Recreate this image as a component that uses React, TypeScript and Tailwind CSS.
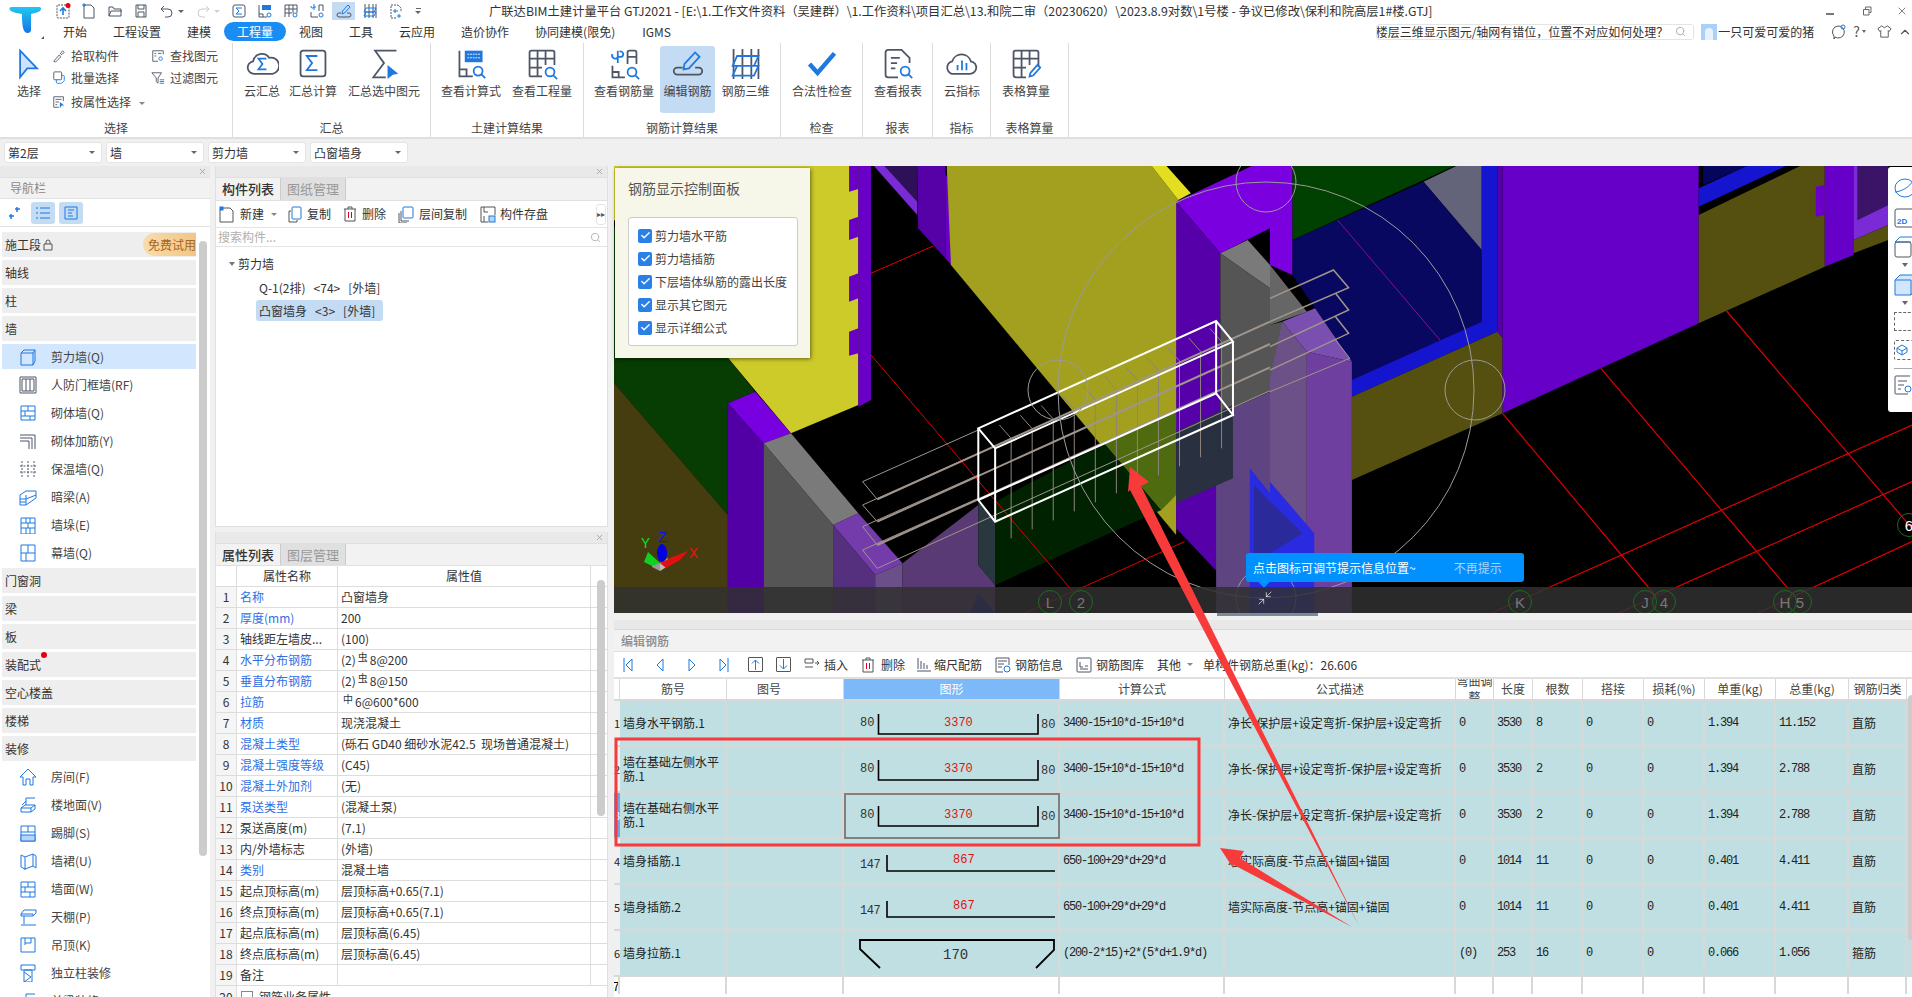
import React from "react";
import { Check, Minimize2, Search, X, ChevronUp } from "lucide-react";

const GRAY = "#4d5566";
const BLUE = "#1f78e0";

function Ico({ s = 16, vb = 16, children }: { s?: number; vb?: number; children: React.ReactNode }) {
  return (
    <svg width={s} height={s} viewBox={`0 0 ${vb} ${vb}`} fill="none" stroke={GRAY} strokeWidth={vb > 16 ? 2 : 1} className="shrink-0">
      {children}
    </svg>
  );
}

const Sigma = ({ x, y, k = 1, c = BLUE }: { x: number; y: number; k?: number; c?: string }) => (
  <polyline points={`${x + 12 * k},${y} ${x},${y} ${x + 6 * k},${y + 8 * k} ${x},${y + 16 * k} ${x + 12 * k},${y + 16 * k}`} stroke={c} fill="none" strokeWidth={2} />
);

const Mag = ({ x, y, r = 4 }: { x: number; y: number; r?: number }) => (
  <g stroke={BLUE} strokeWidth={2}>
    <circle cx={x} cy={y} r={r} fill="#fff" />
    <line x1={x + r * 0.7} y1={y + r * 0.7} x2={x + r + 3} y2={y + r + 3} />
  </g>
);

const big: Record<string, React.ReactNode> = {
  select: <polygon points="8,3 27,23 16,23 8,33" fill="#cfe2fb" stroke={BLUE} strokeWidth={2} />,
  cloudSum: (
    <>
      <path d="M10 29 a7 7 0 0 1 -2 -14 a10 10 0 0 1 18 -4 a8 8 0 0 1 4 18 z" stroke={GRAY} strokeWidth={2} />
      <Sigma x={14} y={12} k={0.75} />
    </>
  ),
  sum: (
    <>
      <rect x="4" y="3" width="28" height="29" rx="3" stroke={GRAY} strokeWidth={2} />
      <Sigma x={11} y={9} />
    </>
  ),
  sumSel: (
    <>
      <polyline points="32,3 8,3 18,17 6,33 20,33" stroke={GRAY} strokeWidth={2} />
      <polygon points="22,19 34,29 28,30 22,35" fill={BLUE} />
    </>
  ),
  calcF: (
    <>
      <polyline points="5,3 5,32 20,32" stroke={GRAY} strokeWidth={2} />
      <polyline points="5,24 13,24 13,32" stroke={GRAY} strokeWidth={2} />
      <rect x="11" y="3" width="20" height="13" fill={BLUE} stroke="none" />
      <path d="M14 7h14M14 11h14" stroke="#fff" strokeDasharray="2 1" />
      <Mag x={26} y={26} r={5} />
    </>
  ),
  calcQ: (
    <>
      <path d="M4 32V5a2 2 0 0 1 2-2h24a2 2 0 0 1 2 2v14M4 12h28M4 22h14M13 3v29M22 3v16M4 32h14" stroke={GRAY} strokeWidth={2} />
      <Mag x={27} y={27} r={5} />
    </>
  ),
  rebarQ: (
    <>
      <path d="M5 20v13h14M5 27h7v6" stroke={GRAY} strokeWidth={2} />
      <path d="M22 18V5a2 2 0 0 1 2-2h6a2 2 0 0 1 2 2v13M22 10h10" stroke={GRAY} strokeWidth={2} />
      <path d="M11 3v14M5 7a3 3 0 0 0 6 3h4a3 3 0 0 0-2-6" stroke={BLUE} strokeWidth={2} />
      <Mag x={27} y={27} r={5} />
    </>
  ),
  edit: (
    <>
      <path d="M12 22H6a3 3 0 0 0 0 8h24a3 3 0 0 0 0-8h-4" stroke={GRAY} strokeWidth={2} />
      <path d="M13 24l1-6L26 5l5 5-12 13z" stroke={BLUE} strokeWidth={2} />
    </>
  ),
  rebar3d: (
    <>
      <path d="M4 1v34M14 1v34M24 1v34M32 1v34" stroke={GRAY} strokeWidth={2} />
      <path d="M8 9h24l-5 11H3zM8 20h24l-5 11H3z" stroke={BLUE} strokeWidth={2} />
    </>
  ),
  check: <polyline points="4,18 13,28 32,6" stroke={BLUE} strokeWidth={5} />,
  report: (
    <>
      <path d="M18 33H7a3 3 0 0 1-3-3V5a3 3 0 0 1 3-3h15l9 9v6" stroke={GRAY} strokeWidth={2} />
      <path d="M10 11h10M10 17h7M10 23h5" stroke={GRAY} strokeWidth={2} />
      <Mag x={26} y={26} r={5} />
    </>
  ),
  cloudIdx: (
    <>
      <path d="M10 29 a7 7 0 0 1 -3 -14 a11 11 0 0 1 21 0 a7 7 0 0 1 -2 14 z" stroke={GRAY} strokeWidth={2} />
      <path d="M13 25v-6M18 25V14M23 25v-8" stroke={BLUE} strokeWidth={2} />
    </>
  ),
  tableCalc: (
    <>
      <path d="M4 30V5a2 2 0 0 1 2-2h24a2 2 0 0 1 2 2v16M4 12h28M4 22h14M13 3v30M22 3v16M4 30a3 3 0 0 0 3 3h11" stroke={GRAY} strokeWidth={2} />
      <path d="M22 32l1-4 8-9 3 3-8 9z" stroke={BLUE} strokeWidth={2} />
    </>
  ),
};

function BigBtn({ icon, label, cls }: { icon: string; label: string; cls: string }) {
  return (
    <div className={`flex flex-col items-center pt-[2px] h-[67px] rounded-[3px] ${cls}`}>
      <svg width="34" height="32" viewBox="0 0 36 36" fill="none" className="shrink-0">
        {big[icon]}
      </svg>
      <span className="mt-[2px] text-[12px] leading-[18px] text-[#444] whitespace-nowrap">{label}</span>
    </div>
  );
}

function Group({ label, w, children }: { label: string; w: string; children: React.ReactNode }) {
  return (
    <div className={`flex flex-col h-[94px] mt-[2px] border-r border-[#dcdcdc] ${w}`}>
      <div className="flex h-[76px] pt-[3px]">{children}</div>
      <div className="text-center text-[12px] leading-[18px] text-[#444]">{label}</div>
    </div>
  );
}

function SmallBtn({ label, children, cls = "" }: { label: string; children: React.ReactNode; cls?: string }) {
  return (
    <div className={`flex items-center h-[22px] text-[12px] text-[#444] whitespace-nowrap ${cls}`}>
      {children}
      <span className="ml-[5px]">{label}</span>
    </div>
  );
}

function Combo({ text }: { text: string }) {
  return (
    <div className="flex items-center justify-between w-[98px] h-[21px] pl-[3px] pr-[6px] bg-white rounded-[3px] border border-[#e4e4e4] text-[12px] text-[#333]">
      <span>{text}</span>
      <span className="w-0 h-0 border-x-[3px] border-x-transparent border-t-[3px] border-t-[#666]" />
    </div>
  );
}

function QA({ children, cls = "" }: { children: React.ReactNode; cls?: string }) {
  return <div className={`flex items-center justify-center w-[16px] h-[18px] ${cls}`}>{children}</div>;
}

function TitleBar() {
  return (
    <div className="flex items-center h-[22px] w-full">
      <div className="flex items-center w-[439px] pl-[5px] gap-[10px]">
        <QA>
          <Ico>
            <rect x="2" y="2" width="12" height="13" rx="1" strokeDasharray="2 1" />
            <path d="M8 12V5M5 8l3-3 3 3" stroke={BLUE} strokeWidth={1.6} />
            <circle cx="13" cy="2.5" r="2.5" fill="#e60012" stroke="none" />
          </Ico>
        </QA>
        <QA>
          <Ico>
            <path d="M3 2h7l3 3v10H3z" />
            <path d="M2 1h2v2H2z" stroke={BLUE} />
          </Ico>
        </QA>
        <QA>
          <Ico>
            <path d="M2 13V4h4l1 2h7v7zM2 13l2-5h11" />
          </Ico>
        </QA>
        <QA>
          <Ico>
            <path d="M3 2h10v12H3zM5 2v4h6V2M5 14v-5h6v5" />
          </Ico>
        </QA>
        <div className="flex items-center w-[26px]">
          <Ico>
            <path d="M5 3L2 6l3 3M2 6h7a4 4 0 0 1 0 8H6" />
          </Ico>
          <span className="ml-[3px] w-0 h-0 border-x-[3px] border-x-transparent border-t-[3px] border-t-[#666]" />
        </div>
        <div className="flex items-center w-[26px] opacity-30">
          <Ico>
            <path d="M11 3l3 3-3 3M14 6H7a4 4 0 0 0 0 8h3" />
          </Ico>
          <span className="ml-[3px] w-0 h-0 border-x-[3px] border-x-transparent border-t-[3px] border-t-[#666]" />
        </div>
        <QA>
          <Ico>
            <rect x="2" y="2" width="12" height="12" rx="2" />
            <polyline points="11,5 5,5 8,8 5,11 11,11" stroke={BLUE} />
          </Ico>
        </QA>
        <QA>
          <Ico>
            <path d="M2 2v12h8M2 11h4v3" />
            <rect x="5" y="2" width="9" height="5" fill={BLUE} stroke="none" />
            <circle cx="12" cy="12" r="2" stroke={BLUE} />
          </Ico>
        </QA>
        <QA>
          <Ico>
            <path d="M2 14V2h12v8M2 6h12M2 10h7M6 2v12M10 2v8" />
            <circle cx="12" cy="12" r="2" stroke={BLUE} />
          </Ico>
        </QA>
        <QA>
          <Ico>
            <path d="M2 9v5h7M10 8V2h4v6" />
            <path d="M5 1v6M2 3a1.5 1.5 0 0 0 3 1h2" stroke={BLUE} />
            <circle cx="12" cy="12" r="2" stroke={BLUE} />
          </Ico>
        </QA>
        <QA cls="bg-[#c3dbf3] w-[23px] -mx-[3px]">
          <Ico>
            <path d="M5 10H3a2 2 0 0 0 0 4h10a2 2 0 0 0 0-4h-2" />
            <path d="M6 11l.5-3L12 2l2 2-5.500 6z" stroke={BLUE} />
          </Ico>
        </QA>
        <QA>
          <Ico>
            <path d="M3 1v14M7 1v14M11 1v14M14 1v14" />
            <path d="M4 5h10l-2 4H2zM4 9h10l-2 4H2z" stroke={BLUE} />
          </Ico>
        </QA>
        <QA>
          <Ico>
            <path d="M8 15H3V2h7l3 3v4" strokeDasharray="2 1" />
            <path d="M11 11v4M9 13h4M5 8h5M7 6v4" stroke={BLUE} />
          </Ico>
        </QA>
        <div className="ml-[1px] flex flex-col items-center gap-[2px]">
          <span className="w-[5px] h-px bg-[#666]" />
          <span className="w-0 h-0 border-x-[3px] border-x-transparent border-t-[3px] border-t-[#666]" />
        </div>
      </div>
      <div className="text-[12.300px] text-[#333] whitespace-nowrap">
        广联达BIM土建计量平台 GTJ2021 - [E:\1.工作文件资料（吴建群）\1.工作资料\项目汇总\13.和院二审（20230620）\2023.8.9对数\1号楼 - 争议已修改\保利和院高层1#楼.GTJ]
      </div>
      <div className="ml-auto flex items-center pr-[4px] text-[#555]">
        <span className="w-[8px] h-[2px] mt-[6px] bg-[#777]" />
        <svg width="10" height="10" viewBox="0 0 10 10" fill="none" stroke="#666" className="ml-[28px]">
          <path d="M1.500 3.500h5.500v5.500h-5.500zM3.500 3V1h5.500v5.500H7.500" />
        </svg>
        <X size={12} strokeWidth={1.5} className="ml-[24px]" />
      </div>
    </div>
  );
}

const tabs = [
  ["开始", "ml-[13px]"],
  ["工程设置", "ml-[26px]"],
  ["建模", "ml-[26px]"],
  ["工程量", "ml-[13px]"],
  ["视图", "ml-[13px]"],
  ["工具", "ml-[26px]"],
  ["云应用", "ml-[26px]"],
  ["造价协作", "ml-[26px]"],
  ["协同建模(限免)", "ml-[26px]"],
  ["IGMS", "ml-[27px]"],
];

function TabBar() {
  return (
    <div className="flex items-center h-[19px] w-full">
      {tabs.map(([t, m]) =>
        t === "工程量" ? (
          <span key={t} className={`${m} flex items-center justify-center w-[62px] h-[19px] rounded-full bg-[#1a8df5] text-white text-[12px] shrink-0`}>
            {t}
          </span>
        ) : (
          <span key={t} className={`${m} text-[12px] text-[#333] whitespace-nowrap shrink-0`}>
            {t}
          </span>
        )
      )}
      <div className="ml-auto flex items-center justify-end w-[318px] h-[16px] bg-white border border-[#e4e4e4] rounded-[3px] overflow-hidden shrink-0">
        <span className="text-[12px] text-[#333] whitespace-nowrap leading-[14px] shrink-0">楼层三维显示图元/轴网有错位，位置不对应如何处理？</span>
        <span className="flex items-center justify-center w-[25px] h-full bg-white shrink-0">
          <Search size={11} color="#aaa" />
        </span>
      </div>
      <div className="ml-[7px] w-[16px] h-[16px] bg-[#a8d0f8] flex items-end justify-center shrink-0">
        <span className="w-[8px] h-[12px] rounded-t-full bg-[#e8f2fc]" />
      </div>
      <span className="ml-[1px] text-[12px] text-[#333] whitespace-nowrap shrink-0">一只可爱可爱的猪</span>
      <svg width="16" height="16" viewBox="0 0 16 16" fill="none" stroke="#555" className="ml-[16px] shrink-0">
        <path d="M8 2a6 6 0 1 1-3 11l-1 2v-3A6 6 0 0 1 8 2z" />
        <circle cx="13" cy="3" r="2" stroke={BLUE} />
      </svg>
      <span className="ml-[7px] text-[14px] text-[#555]">?</span>
      <span className="ml-[2px] w-0 h-0 border-x-[2px] border-x-transparent border-t-[3px] border-t-[#666]" />
      <svg width="15" height="15" viewBox="0 0 16 16" fill="none" stroke="#555" className="ml-[11px] shrink-0">
        <path d="M5 2L1 5l2 3 1-1v7h8V7l1 1 2-3-4-3-3 2z" />
      </svg>
      <ChevronUp size={14} color="#555" className="ml-[6px] shrink-0" />
    </div>
  );
}

function Ribbon() {
  return (
    <div className="flex h-[98px] bg-white border-b-2 border-[#dfdfdf] shrink-0">
      <Group label="选择" w="w-[233px]">
        <BigBtn icon="select" label="选择" cls="w-[40px] ml-[9px]" />
        <div className="ml-[3px] w-[99px] -mt-[1px] flex flex-col">
          <SmallBtn label="拾取构件">
            <Ico s={14}>
              <path d="M2 14l6-7 2 2-6 6zM9 6l3-4 2 2-4 3" />
            </Ico>
          </SmallBtn>
          <SmallBtn label="批量选择">
            <Ico s={14}>
              <rect x="2" y="1" width="9" height="9" rx="1" />
              <path d="M5 10v3a1 1 0 0 0 1 1h5l3-3V6a1 1 0 0 0-1-1h-2" stroke={BLUE} />
            </Ico>
          </SmallBtn>
          <SmallBtn label="按属性选择" cls="mt-[2px]">
            <Ico s={14}>
              <path d="M13 7V2H2v12h6M4 5h7M4 8h4M4 11h2" />
              <polygon points="9,8 14,12 11,12 9,15" fill={BLUE} stroke="none" />
            </Ico>
          </SmallBtn>
          <span className="absolute left-[139px] top-[102px] w-0 h-0 border-x-[3px] border-x-transparent border-t-[3px] border-t-[#888]" />
        </div>
        <div className="w-[64px] -mt-[1px] flex flex-col">
          <SmallBtn label="查找图元">
            <Ico s={14}>
              <path d="M14 6V2H2v12h6M4 5h2M8 5h4M4 8h2" />
              <circle cx="11" cy="11" r="2" stroke={BLUE} />
            </Ico>
          </SmallBtn>
          <SmallBtn label="过滤图元">
            <Ico s={14}>
              <path d="M1 2h11L8 8v6L6 12V8z" />
              <path d="M10 10h5M10 12h5M10 14h5" stroke={BLUE} />
            </Ico>
          </SmallBtn>
        </div>
      </Group>
      <Group label="汇总" w="w-[198px]">
        <BigBtn icon="cloudSum" label="云汇总" cls="w-[46px] ml-[6px]" />
        <BigBtn icon="sum" label="汇总计算" cls="w-[52px] ml-[2px]" />
        <BigBtn icon="sumSel" label="汇总选中图元" cls="w-[76px] ml-[7px]" />
      </Group>
      <Group label="土建计算结果" w="w-[153px]">
        <BigBtn icon="calcF" label="查看计算式" cls="w-[64px] ml-[8px]" />
        <BigBtn icon="calcQ" label="查看工程量" cls="w-[64px] ml-[7px]" />
      </Group>
      <Group label="钢筋计算结果" w="w-[197px]">
        <BigBtn icon="rebarQ" label="查看钢筋量" cls="w-[64px] ml-[8px]" />
        <BigBtn icon="edit" label="编辑钢筋" cls="w-[55px] ml-[4px] bg-[#c3dbf3]" />
        <BigBtn icon="rebar3d" label="钢筋三维" cls="w-[55px] ml-[3px]" />
      </Group>
      <Group label="检查" w="w-[82px]">
        <BigBtn icon="check" label="合法性检查" cls="w-[64px] ml-[9px]" />
      </Group>
      <Group label="报表" w="w-[70px]">
        <BigBtn icon="report" label="查看报表" cls="w-[52px] ml-[9px]" />
      </Group>
      <Group label="指标" w="w-[58px]">
        <BigBtn icon="cloudIdx" label="云指标" cls="w-[40px] ml-[9px]" />
      </Group>
      <Group label="表格算量" w="w-[78px]">
        <BigBtn icon="tableCalc" label="表格算量" cls="w-[52px] ml-[9px]" />
      </Group>
    </div>
  );
}

function PanelHead() {
  return (
    <div className="flex items-center justify-end h-[11px] bg-[#e9e9e9] pr-[3px] shrink-0">
      <X size={9} color="#999" strokeWidth={2} />
    </div>
  );
}

const navIcons: Record<string, React.ReactNode> = {
  cube: <path d="M2 5h12v12H2zM2 5l3-3h11v11l-2 4M14 5l2-3" />,
  frame: <path d="M1 1h16v16H1zM3 3h12v12H3zM7 3v12M11 3v12" />,
  brick: <path d="M2 2h14v14H2zM2 7h14M2 12h14M9 2v5M6 7v5M11 12v4" />,
  hook: <path d="M1 3h15v14M1 6h12v11M1 9h9v8" />,
  dash: <path d="M3 1v16M15 1v16M9 1v16M1 6h16M1 12h16" strokeDasharray="2 1.500" />,
  beam: <path d="M1 7l6-4h10v4l-10 4H1zM1 11v6h6v-6M7 7v4M7 14H1M17 7v3l-10 7" />,
  pier: <path d="M2 2h14v16H2zM2 7h14M2 12h14M7 2v5M11 2v5M9 7v5M7 12v6M11 12v6" />,
  curtain: <path d="M2 1h14v16H2zM2 9h14M9 1v8M7 9v8" />,
  room: <path d="M9 1L1 9h3v8h3v-6h4v6h3V9h3z" />,
  floor: <path d="M2 16v-4l4-3h10v4l-4 3zM2 12h10v4M12 12l4-3M7 9V2h9M7 5l-4 4" />,
  skirt: (
    <>
      <path d="M2 2h14v15H2zM2 8h14M9 2v6" />
      <rect x="2" y="11" width="14" height="6" fill="#b8d4f5" />
    </>
  ),
  dado: <path d="M2 3l4 2 8-3 3 2v12l-3-2-8 3-4-2zM6 5v13M14 2v12" />,
  wall: <path d="M2 2h14v15H2zM2 7h14M2 12h14M9 2v5M6 7v5M11 12v5" />,
  ceil: <path d="M2 6l3-4h12v3l-3 3H2zM2 6h12v2M5 8v8M2 17h15" />,
  susp: <path d="M2 2h14v14H2zM6 2v5h6V2M6 9v-2" />,
  col: <path d="M2 1h14v5H2zM5 6h8v12H5zM5 8l7 5-7 5" />,
};

function Nav({ label, icon, active }: { label: string; icon: string; active?: boolean }) {
  return (
    <div className={`flex items-center w-[194px] h-[25px] mb-[3px] pl-[17px] shrink-0 ${active ? "bg-[#d2e6fd]" : ""}`}>
      <svg width="18" height="18" viewBox="0 0 18 18" fill="none" stroke={icon === "frame" || icon === "hook" || icon === "dash" ? "#4d5566" : BLUE} strokeWidth={1} className="shrink-0">
        {navIcons[icon]}
      </svg>
      <span className="ml-[14px] text-[12px] text-[#444] whitespace-nowrap">{label}</span>
    </div>
  );
}

function Section({ label, children }: { label: string; children?: React.ReactNode }) {
  return (
    <div className="relative flex items-center w-[194px] h-[25px] mb-[3px] pl-[3px] bg-[#eeeeee] text-[12px] text-[#333] shrink-0">
      {label}
      {children}
    </div>
  );
}

function LeftPanel() {
  return (
    <div className="w-[210px] h-full bg-white flex flex-col shrink-0 overflow-hidden">
      <PanelHead />
      <div className="flex items-center h-[22px] pl-[10px] bg-[#f2f2f2] border-y border-[#e2e2e2] text-[12px] text-[#8a8a8a] shrink-0">导航栏</div>
      <div className="flex items-center h-[28px] pl-[8px] gap-[4px] border-b border-[#e2e2e2] shrink-0">
        <svg width="14" height="14" viewBox="0 0 14 14" fill="none" stroke={BLUE} strokeWidth={1.500} className="mr-[5px]">
          <path d="M9 1v5M7 3h5M3 8v5M1 10h5" />
        </svg>
        <div className="flex items-center justify-center w-[24px] h-[22px] rounded-[3px] bg-[#c3dbf3]">
          <svg width="16" height="16" viewBox="0 0 16 16" fill="none" stroke={BLUE}>
            <path d="M5 3h10M5 8h10M5 13h10M1 3h2M1 8h2M1 13h2" />
          </svg>
        </div>
        <div className="flex items-center justify-center w-[24px] h-[22px] rounded-[3px] bg-[#c3dbf3]">
          <svg width="16" height="16" viewBox="0 0 16 16" fill="none" stroke={BLUE}>
            <path d="M2 2h12v12H2zM5 5h6M5 8h4M5 11h5" />
          </svg>
        </div>
      </div>
      <div className="flex flex-1 min-h-0">
        <div className="w-[194px] ml-[2px] pt-[5px] flex flex-col">
          <Section label="施工段">
            <svg width="10" height="12" viewBox="0 0 10 12" fill="none" stroke="#555" className="ml-[2px]">
              <path d="M1 5h8v6H1zM3 5V3a2 2 0 0 1 4 0v2" />
            </svg>
            <span className="absolute right-0 top-[1px] flex items-center justify-end w-[53px] h-[23px] rounded-l-full bg-gradient-to-r from-[#f8dcae] to-[#f2c684] text-[12px] text-[#a8651a]">免费试用</span>
          </Section>
          <Section label="轴线" />
          <Section label="柱" />
          <Section label="墙" />
          <Nav label="剪力墙(Q)" icon="cube" active />
          <Nav label="人防门框墙(RF)" icon="frame" />
          <Nav label="砌体墙(Q)" icon="brick" />
          <Nav label="砌体加筋(Y)" icon="hook" />
          <Nav label="保温墙(Q)" icon="dash" />
          <Nav label="暗梁(A)" icon="beam" />
          <Nav label="墙垛(E)" icon="pier" />
          <Nav label="幕墙(Q)" icon="curtain" />
          <Section label="门窗洞" />
          <Section label="梁" />
          <Section label="板" />
          <Section label="装配式">
            <span className="absolute left-[39px] top-[0px] w-[6px] h-[6px] rounded-full bg-[#e60012]" />
          </Section>
          <Section label="空心楼盖" />
          <Section label="楼梯" />
          <Section label="装修" />
          <Nav label="房间(F)" icon="room" />
          <Nav label="楼地面(V)" icon="floor" />
          <Nav label="踢脚(S)" icon="skirt" />
          <Nav label="墙裙(U)" icon="dado" />
          <Nav label="墙面(W)" icon="wall" />
          <Nav label="天棚(P)" icon="ceil" />
          <Nav label="吊顶(K)" icon="susp" />
          <Nav label="独立柱装修" icon="col" />
          <Nav label="单梁装修" icon="floor" />
        </div>
        <div className="ml-[3px] mt-[14px] w-[8px] h-[615px] rounded-full bg-[#cccccc]" />
      </div>
    </div>
  );
}

function Tabs2({ a, b, h }: { a: string; b: string; h: string }) {
  return (
    <div className={`flex ${h} bg-[#f2f2f2] border-y border-[#e0e0e0] shrink-0`}>
      <div className="flex items-center justify-center w-[65px] text-[13px] font-medium text-[#333] bg-[#f2f2f2] border-r border-[#ccc]">{a}</div>
      <div className="flex items-center justify-center w-[65px] text-[13px] text-[#999] bg-[#e0e0e0] border-r border-[#ccc]">{b}</div>
    </div>
  );
}

function ToolText({ t, cls = "" }: { t: string; cls?: string }) {
  return <span className={`text-[12px] text-[#333] whitespace-nowrap ${cls}`}>{t}</span>;
}

const Trash = () => (
  <svg width="14" height="16" viewBox="0 0 14 16" fill="none" stroke="#555" className="shrink-0">
    <path d="M1 3h12M5 3V1h4v2M2 3v12h10V3" />
    <path d="M5.500 6v6M8.500 6v6" stroke="#e60012" />
  </svg>
);

const propRows: [string, React.ReactNode, boolean][] = [
  ["名称", "凸窗墙身", true],
  ["厚度(mm)", "200", true],
  ["轴线距左墙皮...", "(100)", false],
  ["水平分布钢筋", <>(2)<Sym t="虫" />8@200</>, true],
  ["垂直分布钢筋", <>(2)<Sym t="虫" />8@150</>, true],
  ["拉筋", <><Sym t="中" />6@600*600</>, true],
  ["材质", "现浇混凝土", true],
  ["混凝土类型", "(砾石 GD40 细砂水泥42.5  现场普通混凝土)", true],
  ["混凝土强度等级", "(C45)", true],
  ["混凝土外加剂", "(无)", true],
  ["泵送类型", "(混凝土泵)", true],
  ["泵送高度(m)", "(7.1)", false],
  ["内/外墙标志", "(外墙)", false],
  ["类别", "混凝土墙", true],
  ["起点顶标高(m)", "层顶标高+0.65(7.1)", false],
  ["终点顶标高(m)", "层顶标高+0.65(7.1)", false],
  ["起点底标高(m)", "层顶标高(6.45)", false],
  ["终点底标高(m)", "层顶标高(6.45)", false],
  ["备注", "", false],
];

function Sym({ t }: { t: string }) {
  return <span className="mx-[2px] text-[10px] leading-none relative -top-[3px]">{t}</span>;
}

function MidPanel() {
  return (
    <div className="ml-[5px] w-[393px] h-full flex flex-col shrink-0">
      <div className="h-[361px] bg-white flex flex-col border border-t-0 border-[#e0e0e0] shrink-0">
        <PanelHead />
        <Tabs2 a="构件列表" b="图纸管理" h="h-[24px]" />
        <div className="flex items-center h-[27px] pl-[3px] border-b border-[#e4e4e4] shrink-0">
          <svg width="16" height="17" viewBox="0 0 16 17" fill="none" stroke="#555" className="shrink-0">
            <path d="M3 2h8l3 3v11H1V4" />
            <rect x="0.500" y="0.500" width="4" height="4" fill={BLUE} stroke="none" />
          </svg>
          <ToolText t="新建" cls="ml-[5px]" />
          <span className="ml-[7px] w-0 h-0 border-x-[3px] border-x-transparent border-t-[3px] border-t-[#888]" />
          <svg width="16" height="17" viewBox="0 0 16 17" fill="none" stroke="#555" className="ml-[10px] shrink-0">
            <path d="M4 5H2v11h8v-2" />
            <rect x="5" y="1" width="9" height="12" rx="1" stroke={BLUE} />
          </svg>
          <ToolText t="复制" cls="ml-[4px]" />
          <span className="ml-[12px]"><Trash /></span>
          <ToolText t="删除" cls="ml-[5px]" />
          <svg width="16" height="17" viewBox="0 0 16 17" fill="none" stroke="#555" className="ml-[12px] shrink-0">
            <path d="M3 5v10h8M1 7v10h8" />
            <rect x="5" y="1" width="10" height="11" rx="1" stroke={BLUE} />
          </svg>
          <ToolText t="层间复制" cls="ml-[5px]" />
          <svg width="16" height="17" viewBox="0 0 16 17" fill="none" stroke="#555" className="ml-[13px] shrink-0">
            <path d="M15 9V1H1v15h7M4 1v5h4M4 16v-6" />
            <rect x="9" y="10" width="6" height="6" fill="#b8d4f5" stroke={BLUE} />
          </svg>
          <ToolText t="构件存盘" cls="ml-[4px]" />
          <div className="ml-auto mr-[1px] flex items-center justify-center w-[10px] h-[21px] border border-[#e4e4e4] rounded-[3px] text-[8px] text-[#555]">▸▸</div>
        </div>
        <div className="flex items-center justify-between h-[19px] pl-[2px] pr-[6px] border-b border-[#e4e4e4] shrink-0">
          <span className="text-[12px] text-[#b0b0b0]">搜索构件...</span>
          <Search size={11} color="#b0b0b0" />
        </div>
        <div className="pt-[5px] flex-1 text-[12px] text-[#333]">
          <div className="flex items-center h-[24px] pl-[13px]">
            <span className="w-0 h-0 border-x-[3px] border-x-transparent border-t-[4px] border-t-[#777]" />
            <span className="ml-[3px]">剪力墙</span>
          </div>
          <div className="flex items-center h-[24px] pl-[43px] whitespace-pre">{"Q-1(2排)   <74>   [外墙]"}</div>
          <div className="flex items-center w-[127px] h-[21px] ml-[40px] pl-[3px] bg-[#c3dbf3] rounded-[3px] whitespace-pre">{"凸窗墙身   <3>   [外墙]"}</div>
        </div>
      </div>
      <div className="h-[5px] shrink-0" />
      <div className="flex-1 bg-white flex flex-col overflow-hidden border-x border-[#e0e0e0] relative">
        <PanelHead />
        <Tabs2 a="属性列表" b="图层管理" h="h-[23px]" />
        <div className="grid grid-cols-[21px_101px_253px] h-[21px] border-b border-[#ddd] text-[12px] text-[#333] shrink-0">
          <div className="border-r border-[#ddd]" />
          <div className="flex items-center justify-center border-r border-[#ddd]">属性名称</div>
          <div className="flex items-center justify-center border-r border-[#ddd]">属性值</div>
        </div>
        {propRows.map(([n, v, link], i) => (
          <div key={i} className="grid grid-cols-[21px_101px_253px] h-[21px] border-b border-[#ddd] text-[12px] shrink-0">
            <div className="flex items-center justify-center bg-[#f5f5f5] border-r border-[#ddd] text-[#333]">{i + 1}</div>
            <div className={`flex items-center pl-[3px] border-r border-[#ddd] whitespace-nowrap ${link ? "text-[#2e6fe6]" : "text-[#333]"}`}>{n}</div>
            <div className="flex items-center pl-[3px] border-r border-[#ddd] text-[#333] whitespace-pre">{v}</div>
          </div>
        ))}
        <div className="grid grid-cols-[21px_354px] h-[21px] text-[12px] text-[#333] shrink-0">
          <div className="flex items-center justify-center bg-[#f5f5f5] border-r border-[#ddd]">20</div>
          <div className="flex items-center pl-[4px]">
            <span className="flex items-center justify-center w-[12px] h-[12px] border border-[#888] text-[10px] leading-none">-</span>
            <span className="ml-[6px]">钢筋业务属性</span>
          </div>
        </div>
        <div className="absolute left-[381px] top-[48px] w-[8px] h-[236px] rounded-full bg-[#cccccc]" />
      </div>
    </div>
  );
}

type Poly = [string, string];
const z6: Poly[] = [
  ["#cdcb2a", "0,0 590,0 590,720 430,805 280,578 0,150"],
  ["#073c02", "0,170 280,578 345,680 280,715 280,1050 0,640"],
  ["#453d10", "0,640 280,1050 280,1345 0,1345"],
  ["#6a00c8", "590,0 620,0 620,705 590,725"],
  ["#6a00c8", "568,0 590,0 590,72 568,80"],
  ["#6a00c8", "568,165 590,155 590,215 568,225"],
  ["#6a00c8", "568,335 590,325 590,400 568,410"],
  ["#6a00c8", "568,500 590,490 590,565 568,572"],
  ["#2e1058", "650,0 730,0 730,110"],
  ["#7a2bd6", "625,0 650,0 730,110 730,150"],
  ["#5600a8", "730,0 797,0 797,280 732,190"],
  ["#6a00c8", "797,30 810,45 810,300 797,280"],
  ["#a3a020", "800,0 1285,0 1350,105 1345,1110 810,300"],
  ["#e3df20", "1285,0 1320,0 1380,85 1350,105"],
  ["#002200", "915,1010 1175,835 1310,1035 915,1260"],
  ["#4f6b10", "1175,835 1345,740 1345,990 1310,1035"],
  ["#7a00e0", "1345,110 1530,0 1568,0 1568,190 1450,265"],
  ["#5500a8", "1345,110 1450,265 1450,1230 1345,1090"],
  ["#7a7a7a", "1450,265 1515,225 1568,300 1568,370"],
  ["#555555", "1450,265 1568,370 1568,680 1450,745"],
  ["#5e4480", "1450,745 1568,680 1568,1345 1440,1345 1440,745"],
  ["#29303f", "1345,800 1480,720 1480,940 1345,1015"],
  ["#7800e0", "280,715 345,680 430,805 365,835"],
  ["#5200a6", "280,715 365,835 365,1345 280,1345"],
  ["#7a7a7a", "365,835 430,805 590,1045 530,1080"],
  ["#555555", "365,835 530,1080 530,1345 365,1345"],
  ["#743bab", "530,1080 590,1045 695,1195 630,1230"],
  ["#55307f", "530,1080 630,1230 630,1345 530,1345"],
  ["#6a4f88", "630,1230 695,1195 695,1345 630,1345"],
  ["#5a3a74", "695,1195 875,1020 875,1200 915,1260 915,1345 695,1345"],
  ["#28383e", "875,1010 915,1070 915,1260 875,1200"],
  ["#1515b0", "855,1345 875,1285 915,1345"],
  ["#2a2ae0", "1520,910 1568,985 1568,1345 1520,1345"],
  ["#2a2a9a", "1530,960 1568,1010 1568,1165 1530,1190"],
];
const z7: Poly[] = [
  ["#7a00e0", "0,0 55,0 55,330 0,300"],
  ["#004000", "55,0 455,0 55,225"],
  ["#63637a", "375,50 460,0 517,0 517,255"],
  ["#080860", "55,225 375,50 517,255 517,470 200,650 200,590 110,430 55,330"],
  ["#1515d0", "517,0 555,0 555,500 200,695 200,645 517,470"],
  ["#5500a8", "555,0 568,0 568,520 555,500"],
  ["#55500f", "200,695 555,500 568,520 568,745 200,945"],
  ["#6600c8", "568,0 1047,0 1047,475 568,745"],
  ["#05055e", "1058,0 1170,0 1058,60"],
  ["#1515d0", "1047,70 1170,0 1265,0 1047,125"],
  ["#55500f", "1047,150 1300,0 1355,0 1355,305 1047,475"],
  ["#6a00c8", "1333,65 1355,60 1355,150 1333,155"],
  ["#6600c8", "1355,0 1425,0 1425,270 1355,305"],
  ["#3b1468", "1435,0 1510,0 1510,120 1435,165"],
  ["#7a2bd6", "1425,0 1435,0 1435,165 1510,120 1510,180 1425,225"],
  ["#55500f", "1425,225 1510,180 1510,225 1425,265"],
  ["#666666", "0,300 90,440 0,480"],
  ["#555555", "0,480 30,470 30,640 0,640"],
  ["#7a4fb0", "30,470 110,430 200,590 90,560"],
  ["#6c5088", "0,640 30,470 90,560 90,1345 0,1345"],
  ["#6f3fa0", "90,560 200,590 200,1345 90,1345"],
  ["#2a2ae0", "0,950 108,1105 108,1345 0,1345"],
  ["#2a2a9a", "0,1010 80,1105 0,1165"],
];

const hookSets = [
  [1003, 950],
  [1070, 1020],
  [1140, 1085],
  [1210, 1155],
];

function Scene() {
  const ties = Array.from({ length: 11 }, (_, i) => i);
  const ns = { vectorEffect: "non-scaling-stroke" as const };
  return (
    <svg width="1298" height="447" viewBox="614 166 1298 447" className="block">
      <rect x="614" y="166" width="1298" height="447" fill="#000" />
      <g transform="translate(610 165) scale(0.42092 0.33333)">
        {z6.map(([c, p], i) => (
          <polygon key={i} fill={c} points={p} />
        ))}
        <g stroke="#e00000" strokeWidth="1" {...ns}>
          <line x1="620" y1="325" x2="768" y2="243" {...ns} />
          <line x1="620" y1="570" x2="1100" y2="1280" {...ns} />
          <line x1="1365" y1="1130" x2="985" y2="1345" {...ns} />
        </g>
        {ties.map((i) => (
          <g key={i} stroke="#8d847c" strokeWidth="1" fill="none">
            <polyline points={`${925 + i * 50},${780 - i * 29} ${953 + i * 50},${820 - i * 29} ${953 + i * 50},${1120 - i * 27}`} {...ns} />
          </g>
        ))}
        {hookSets.map(([y1, y0], i) => (
          <g key={i} stroke="#a0958c" fill="none">
            <polyline points={`875,${y0 - 155} 600,${y0} 635,${y1}`} strokeWidth="1" {...ns} />
            <line x1="635" y1={y1} x2="1568" y2={y1 - 533} strokeWidth={i === 3 ? 1 : 2} {...ns} />
          </g>
        ))}
        <g stroke="#fff" strokeWidth="2" fill="none">
          <polygon points="875,790 1440,468 1480,530 915,850" {...ns} />
          <polygon points="875,1005 1440,685 1480,750 915,1070" {...ns} />
          <path d="M875 790V1005M1440 468V685M1480 530V750M915 850V1070" {...ns} />
        </g>
      </g>
      <g transform="translate(1270 165) scale(0.40944 0.33333)">
        {z7.map(([c, p], i) => (
          <polygon key={i} fill={c} points={p} />
        ))}
        <g stroke="#e00000" strokeWidth="1.200">
          <line x1="568" y1="745" x2="940" y2="1290" {...ns} />
          <line x1="808" y1="610" x2="1265" y2="1270" {...ns} />
          <line x1="1115" y1="438" x2="1568" y2="1090" {...ns} />
          <line x1="540" y1="1345" x2="1568" y2="780" {...ns} />
          <line x1="850" y1="1345" x2="1568" y2="950" {...ns} />
          <line x1="1190" y1="1345" x2="1568" y2="1130" {...ns} />
        </g>
        <line x1="165" y1="165" x2="415" y2="525" stroke="#8a1080" {...ns} />
        <g stroke="#a0958c" fill="none">
          <polyline points="0,400 155,315 192,368 0,470" strokeWidth="1.500" {...ns} />
          <polyline points="160,385 192,435 0,545" strokeWidth="1.500" {...ns} />
          <polyline points="160,455 192,505 0,615" strokeWidth="1.500" {...ns} />
          <polyline points="160,525 195,580 0,680" strokeWidth="1" {...ns} />
        </g>
      </g>
      <g fill="none" stroke="#9a9a9a">
        <circle cx="1266" cy="390" r="208" />
        <ellipse cx="1266" cy="182" rx="30" ry="30" />
        <ellipse cx="1058" cy="390" rx="30" ry="30" />
        <ellipse cx="1475" cy="390" rx="30" ry="30" />
        <ellipse cx="1266" cy="598" rx="30" ry="30" />
      </g>
      <g>
        <polygon points="660,563 668,558 668,566 660,571" fill="#bbb" />
        <polygon points="652,559 660,563 660,571 652,567" fill="#999" />
        <polygon points="660,563 672,557 688,551 680,560 666,568" fill="#e01010" />
        <polygon points="660,563 648,552 644,562 652,566" fill="#10d020" />
        <ellipse cx="662" cy="553" rx="5" ry="9" fill="#0000e0" />
        <text x="641" y="548" fill="#10e020" fontSize="15" fontFamily="Liberation Sans" textLength="9" lengthAdjust="spacingAndGlyphs">Y</text>
        <text x="658" y="542" fill="#1010f0" fontSize="15" fontFamily="Liberation Sans" textLength="9" lengthAdjust="spacingAndGlyphs">Z</text>
        <text x="689" y="558" fill="#f01010" fontSize="15" fontFamily="Liberation Sans" textLength="9" lengthAdjust="spacingAndGlyphs">X</text>
      </g>
      <rect x="614" y="587" width="1298" height="26" fill="#303030" fillOpacity="0.85" />
      <g fill="none" stroke="#1f6a1f">
        {[1050, 1081, 1520, 1645, 1664, 1785, 1800].map((c) => (
          <ellipse key={c} cx={c} cy="602" rx="11.500" ry="11.500" />
        ))}
        <ellipse cx="1909" cy="525" rx="11.500" ry="11.500" />
      </g>
      <g fill="#777" fontSize="15" fontFamily="Liberation Sans" textAnchor="middle">
        <text x="1050" y="608">L</text>
        <text x="1081" y="608">2</text>
        <text x="1520" y="608">K</text>
        <text x="1645" y="608">J</text>
        <text x="1664" y="608">4</text>
        <text x="1785" y="608">H</text>
        <text x="1800" y="608">5</text>
        <text x="1909" y="531" fill="#fff">6</text>
      </g>
    </svg>
  );
}

const checks = ["剪力墙水平筋", "剪力墙插筋", "下层墙体纵筋的露出长度", "显示其它图元", "显示详细公式"];

function RebarPanel() {
  return (
    <div className="absolute left-[1px] top-[2px] w-[195px] h-[190px] bg-[#f6f7e8] shadow-[1px_1px_4px_rgba(0,0,0,.5)] px-[13px] pt-[10px]">
      <div className="text-[14px] leading-[20px] text-[#555]">钢筋显示控制面板</div>
      <div className="mt-[19px] w-[170px] h-[129px] bg-white border border-[#cccccc] rounded-[3px] pt-[6px] pl-[9px]">
        {checks.map((c) => (
          <div key={c} className="flex items-center h-[23px]">
            <span className="flex items-center justify-center w-[14px] h-[14px] rounded-[2px] bg-[#2b80e8] shrink-0">
              <Check size={11} color="#fff" strokeWidth={3} />
            </span>
            <span className="ml-[3px] text-[12px] text-[#444] whitespace-nowrap">{c}</span>
          </div>
        ))}
      </div>
    </div>
  );
}

function SideTools() {
  return (
    <div className="absolute right-0 top-[1px] w-[24px] h-[245px] bg-white rounded-l-[3px] overflow-hidden pl-[6px] flex flex-col items-start text-[#888]">
      <svg width="26" height="20" viewBox="0 0 26 20" fill="none" stroke={BLUE} className="mt-[11px] shrink-0">
        <ellipse cx="11" cy="10" rx="10" ry="9" />
        <path d="M1 14c8-1 14-5 18-11" />
      </svg>
      <svg width="26" height="20" viewBox="0 0 26 20" fill="none" stroke={GRAY} className="mt-[10px] shrink-0">
        <rect x="1" y="1" width="24" height="18" rx="2" />
        <text x="3" y="16" fill={BLUE} stroke="none" fontSize="8" fontWeight="700" fontFamily="Liberation Sans">2D</text>
      </svg>
      <svg width="26" height="22" viewBox="0 0 26 22" fill="none" stroke={BLUE} className="mt-[8px] shrink-0">
        <path d="M1 6l5-5h16v14" />
        <path d="M1 6h16" />
        <rect x="1" y="6" width="16" height="15" rx="2" stroke={GRAY} />
      </svg>
      <span className="mt-[5px] ml-[8px] w-0 h-0 border-x-[3px] border-x-transparent border-t-[4px] border-t-[#666]" />
      <svg width="26" height="22" viewBox="0 0 26 22" fill="#d2e6fd" stroke={BLUE} className="mt-[7px] shrink-0">
        <path d="M1 6l5-5h16v14L17 21H1z" />
        <path d="M1 6h16v15" fill="none" />
      </svg>
      <span className="mt-[5px] ml-[8px] w-0 h-0 border-x-[3px] border-x-transparent border-t-[4px] border-t-[#666]" />
      <div className="mt-[7px] w-[26px] h-[19px] border border-dashed border-[#666] shrink-0" />
      <div className="mt-[9px] flex items-center justify-center w-[26px] h-[20px] border border-dashed border-[#666] rounded-[2px] shrink-0 pr-[10px]">
        <svg width="12" height="12" viewBox="0 0 12 12" fill="none" stroke={BLUE}>
          <path d="M6 1l5 3v4l-5 3-5-3V4zM1 4l5 3 5-3M6 7v4" />
        </svg>
      </div>
      <div className="mt-[8px] w-[24px] h-px bg-[#aaa] shrink-0" />
      <svg width="24" height="20" viewBox="0 0 24 20" fill="none" stroke={GRAY} className="mt-[6px] shrink-0">
        <path d="M16 1H2a1 1 0 0 0-1 1v16a1 1 0 0 0 1 1h12M4 6h9M4 10h6M4 14h3" />
        <circle cx="14" cy="14" r="3" stroke={BLUE} />
      </svg>
    </div>
  );
}

function Tip() {
  return (
    <div className="absolute left-[632px] top-[387px] w-[278px] h-[29px] rounded-[3px] bg-[#0091ff] flex items-center pl-[7px] text-[12px] whitespace-nowrap">
      <span className="text-white">点击图标可调节提示信息位置~</span>
      <span className="ml-[38px] text-[#a9d6ff]">不再提示</span>
      <span className="absolute left-[14px] -bottom-[4px] w-[8px] h-[8px] rotate-45 bg-[#0091ff]" />
    </div>
  );
}

const cols = "grid grid-cols-[6px_107px_117px_216px_165px_231px_38px_39px_50px_61px_61px_71px_73px_58px]";
const heads = ["", "筋号", "图号", "图形", "计算公式", "公式描述", "弯曲调整", "长度", "根数", "搭接", "损耗(%)", "单重(kg)", "总重(kg)", "钢筋归类"];

const MONO = "Liberation Mono";

function ShapeU() {
  return (
    <svg width="214" height="44" className="block">
      <g fontFamily={MONO} fontSize="12" fill="#333">
        <text x="16" y="25">80</text>
        <text x="197" y="27">80</text>
        <text x="100" y="25" fill="#e01010">3370</text>
      </g>
      <polyline points="34.500,13 34.500,33 194,33 194,13" fill="none" stroke="#000" strokeWidth="1.600" />
    </svg>
  );
}

function ShapeL() {
  return (
    <svg width="214" height="44" className="block">
      <g fontFamily={MONO} fontSize="12" fill="#333">
        <text x="16" y="29" letterSpacing="-0.500">147</text>
        <text x="109" y="24" fill="#e01010">867</text>
      </g>
      <polyline points="43,16 43,32 211,32" fill="none" stroke="#000" strokeWidth="1.600" />
    </svg>
  );
}

function ShapeS() {
  return (
    <svg width="214" height="44" className="block">
      <text x="99" y="28" fontFamily={MONO} fontSize="14" fill="#333">170</text>
      <polyline points="36,37 16,18 16,9 210,9 210,19 192,37" fill="none" stroke="#000" strokeWidth="1.800" />
    </svg>
  );
}

const rebars = [
  { n: "1", name: "墙身水平钢筋.1", shape: <ShapeU />, f: "3400-15+10*d-15+10*d", d: "净长-保护层+设定弯折-保护层+设定弯折", b: "0", len: "3530", c: "8", u: "1.394", t: "11.152", k: "直筋" },
  { n: "2", name: "墙在基础左侧水平筋.1", shape: <ShapeU />, f: "3400-15+10*d-15+10*d", d: "净长-保护层+设定弯折-保护层+设定弯折", b: "0", len: "3530", c: "2", u: "1.394", t: "2.788", k: "直筋" },
  { n: "3", name: "墙在基础右侧水平筋.1", shape: <ShapeU />, f: "3400-15+10*d-15+10*d", d: "净长-保护层+设定弯折-保护层+设定弯折", b: "0", len: "3530", c: "2", u: "1.394", t: "2.788", k: "直筋" },
  { n: "4", name: "墙身插筋.1", shape: <ShapeL />, f: "650-100+29*d+29*d", d: "墙实际高度-节点高+锚固+锚固", b: "0", len: "1014", c: "11", u: "0.401", t: "4.411", k: "直筋" },
  { n: "5", name: "墙身插筋.2", shape: <ShapeL />, f: "650-100+29*d+29*d", d: "墙实际高度-节点高+锚固+锚固", b: "0", len: "1014", c: "11", u: "0.401", t: "4.411", k: "直筋" },
  { n: "6", name: "墙身拉筋.1", shape: <ShapeS />, f: "(200-2*15)+2*(5*d+1.9*d)", d: "", b: "(0)", len: "253", c: "16", u: "0.066", t: "1.056", k: "箍筋" },
];

const cellB = "border-r-2 border-b-2 border-[#d8d8d8]";
const monoCell = "font-['Liberation_Mono',monospace] tracking-[-1.200px]";

function RebarTable() {
  return (
    <div className="relative flex-1 bg-white">
      <div className={`${cols} h-[22px] text-[12px] text-[#444] border-b-2 border-[#d8d8d8]`}>
        {heads.map((h, i) => (
          <div key={i} className={`flex items-center justify-center overflow-hidden text-center border-r border-[#d8d8d8] ${i === 3 ? "bg-[#7db8f8] text-white" : ""} ${i === 2 ? "pr-[32px]" : ""} ${i === 6 ? "leading-[16px] whitespace-normal" : "leading-[14px] whitespace-nowrap"}`}>
            {h}
          </div>
        ))}
      </div>
      {rebars.map((r, i) => (
        <div key={r.n} className={`${cols} h-[46px] bg-[#c0dfe2] text-[12px] text-[#222]`}>
          <div className={`${i === 2 ? "bg-[#6aa7ea] text-white" : "bg-[#f0f0f0]"} flex items-center justify-center overflow-hidden text-[11px] border-b-2 border-[#d8d8d8]`}>{r.n}</div>
          <div className={`flex items-center pl-[3px] pr-[4px] leading-[14px] ${cellB}`}>{r.name}</div>
          <div className={cellB} />
          <div className={`${cellB} ${i === 2 ? "outline-2 -outline-offset-2 outline-[#808080]" : ""}`}>{r.shape}</div>
          <div className={`flex items-center pl-[3px] whitespace-nowrap ${monoCell} ${cellB}`}>{r.f}</div>
          <div className={`flex items-center pl-[3px] whitespace-nowrap ${cellB}`}>{r.d}</div>
          <div className={`flex items-center pl-[3px] ${monoCell} ${cellB}`}>{r.b}</div>
          <div className={`flex items-center pl-[3px] ${monoCell} ${cellB}`}>{r.len}</div>
          <div className={`flex items-center pl-[3px] ${monoCell} ${cellB}`}>{r.c}</div>
          <div className={`flex items-center pl-[3px] ${monoCell} ${cellB}`}>0</div>
          <div className={`flex items-center pl-[3px] ${monoCell} ${cellB}`}>0</div>
          <div className={`flex items-center pl-[3px] ${monoCell} ${cellB}`}>{r.u}</div>
          <div className={`flex items-center pl-[3px] ${monoCell} ${cellB}`}>{r.t}</div>
          <div className={`flex items-center pl-[3px] ${cellB}`}>{r.k}</div>
        </div>
      ))}
      <div className={`${cols} h-[17px] text-[12px]`}>
        {heads.map((_, i) => (
          <div key={i} className="flex items-center justify-center border-r-2 border-[#d8d8d8] overflow-hidden">{i === 0 ? "7" : ""}</div>
        ))}
      </div>
      <div className="absolute right-0 top-[16px] w-[4px] h-[245px] rounded-l-full bg-[#cccccc]" />
    </div>
  );
}

function NavBtn({ flip, bar }: { flip?: boolean; bar?: boolean }) {
  return (
    <svg width="10" height="16" viewBox="0 0 10 16" fill="none" stroke={BLUE} className={flip ? "-scale-x-100 shrink-0" : "shrink-0"}>
      <path d={bar ? "M1 1v14M9 2L3 8l6 6z" : "M8 2L2 8l6 6z"} />
    </svg>
  );
}

function MoveBtn({ up }: { up?: boolean }) {
  return (
    <span className="flex items-center justify-center w-[15px] h-[15px] border border-[#555] rounded-[1px] shrink-0">
      <svg width="9" height="11" viewBox="0 0 9 11" fill="none" stroke={BLUE} className={up ? "" : "rotate-180"}>
        <path d="M4.500 11V1M1 4.500l3.500-3.500 3.500 3.500" />
      </svg>
    </span>
  );
}

function BottomPanel() {
  return (
    <div className="mt-[7px] flex-1 flex flex-col bg-white min-h-0">
      <div className="h-[10px] bg-[#e8e8e8] border-b border-[#d8d8d8] shrink-0" />
      <div className="flex items-center h-[22px] pl-[7px] bg-[#f2f2f2] text-[12px] font-medium text-[#8a8a8a] border-b border-[#e0e0e0] shrink-0">编辑钢筋</div>
      <div className="flex items-center h-[27px] pl-[9px] border-b-2 border-[#e0e0e0] shrink-0">
        <NavBtn bar />
        <span className="ml-[22px]"><NavBtn /></span>
        <span className="ml-[22px]"><NavBtn flip /></span>
        <span className="ml-[22px]"><NavBtn flip bar /></span>
        <span className="ml-[19px]"><MoveBtn up /></span>
        <span className="ml-[13px]"><MoveBtn /></span>
        <svg width="16" height="14" viewBox="0 0 16 14" fill="none" stroke="#555" className="ml-[13px] shrink-0">
          <path d="M1 1h8v4H1zM1 9h8M11 5h4M13 3l2 2-2 2" />
        </svg>
        <ToolText t="插入" cls="ml-[4px]" />
        <span className="ml-[13px]"><Trash /></span>
        <ToolText t="删除" cls="ml-[6px]" />
        <svg width="14" height="16" viewBox="0 0 14 16" fill="none" stroke={GRAY} className="ml-[12px] shrink-0">
          <path d="M1 1v11M4 4v8M7 6v6M10 8v4M0 14h14" />
        </svg>
        <ToolText t="缩尺配筋" cls="ml-[3px]" />
        <svg width="16" height="16" viewBox="0 0 16 16" fill="none" stroke={GRAY} className="ml-[13px] shrink-0">
          <path d="M14 8V1H1v14h7M3 4h9M3 7h6M3 10h4" />
          <circle cx="12" cy="12" r="3" stroke={BLUE} />
        </svg>
        <ToolText t="钢筋信息" cls="ml-[4px]" />
        <svg width="16" height="16" viewBox="0 0 16 16" fill="none" stroke={GRAY} className="ml-[13px] shrink-0">
          <rect x="1" y="1" width="14" height="14" rx="1" />
          <path d="M4 5v5h3M9 9h3M4 12h8" />
        </svg>
        <ToolText t="钢筋图库" cls="ml-[4px]" />
        <ToolText t="其他" cls="ml-[13px]" />
        <span className="ml-[6px] w-0 h-0 border-x-[3px] border-x-transparent border-t-[3px] border-t-[#888]" />
        <ToolText t="单构件钢筋总重(kg)：26.606" cls="ml-[10px]" />
      </div>
      <RebarTable />
    </div>
  );
}

function Annotations() {
  return (
    <svg width="1912" height="997" viewBox="0 0 1912 997" className="absolute left-0 top-0 pointer-events-none">
      <rect x="616" y="739" width="583" height="106" fill="none" stroke="#f73b3b" strokeWidth="3" />
      <polygon points="1130,467 1149,482 1141,486 1359,926 1130,490 1128,492" fill="#f73b3b" />
      <polygon points="1220,848 1244,851 1240,858 1352,927 1232,864 1233,868" fill="#f73b3b" />
    </svg>
  );
}

export default function App() {
  return (
    <div className="relative w-[1912px] h-[997px] overflow-hidden bg-[#f0f0f0] flex flex-col font-['Noto_Sans_CJK_SC','Noto_Sans',sans-serif]">
      <div className="flex h-[41px] bg-white shrink-0">
        <div className="relative w-[50px] shrink-0">
          <svg width="36" height="32" viewBox="0 0 36 32" className="ml-[8px] mt-[3px]">
            <defs>
              <linearGradient id="tlogo" x1="0" y1="0" x2="0" y2="1">
                <stop offset="0" stopColor="#22c7f0" />
                <stop offset="1" stopColor="#1474e6" />
              </linearGradient>
            </defs>
            <path d="M3 4h28c2 0 3 2 1 4-3 2-7 2-9 3v16c0 3-4 4-6 2-3-3-3-13-3-18-3-1-8-1-11-3-2-1-2-4 0-4z" fill="url(#tlogo)" />
          </svg>
          <span className="absolute left-[41px] top-[36px] w-0 h-0 border-l-[3px] border-l-transparent border-b-[3px] border-b-[#555]" />
        </div>
        <div className="flex-1 min-w-0 flex flex-col">
          <TitleBar />
          <TabBar />
        </div>
      </div>
      <Ribbon />
      <div className="flex items-center gap-[4px] h-[27px] pl-[4px] shrink-0">
        <Combo text="第2层" />
        <Combo text="墙" />
        <Combo text="剪力墙" />
        <Combo text="凸窗墙身" />
      </div>
      <div className="flex flex-1 min-h-0">
        <LeftPanel />
        <MidPanel />
        <div className="ml-[6px] flex-1 min-w-0 flex flex-col">
          <div className="relative h-[447px] shrink-0">
            <Scene />
            <RebarPanel />
            <SideTools />
            <Tip />
            <Minimize2 size={16} color="#fff" strokeWidth={1} className="absolute left-[643px] top-[424px]" />
            <span className="absolute left-[603px] top-[447px] w-[101px] h-[3px] bg-[#7a8a96]" />
          </div>
          <BottomPanel />
        </div>
      </div>
      <Annotations />
    </div>
  );
}
